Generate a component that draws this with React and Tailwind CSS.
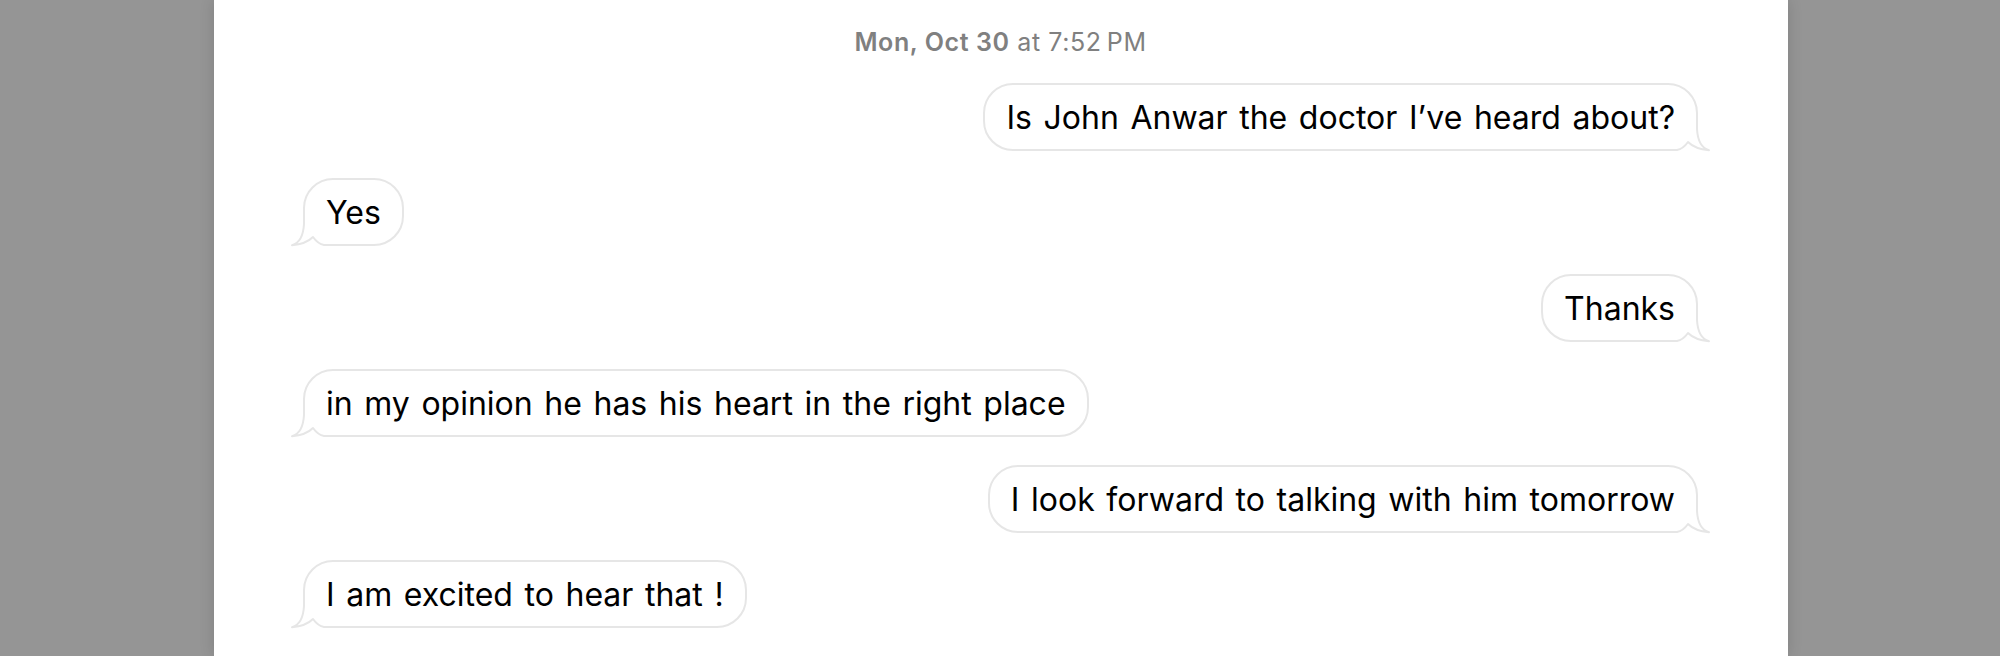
import React from "react";

const messages = [
  { id: 1, mine: true, text: "Is John Anwar the doctor I’ve heard about?" },
  { id: 2, mine: false, text: "Yes" },
  { id: 3, mine: true, text: "Thanks" },
  { id: 4, mine: false, text: "in my opinion he has his heart in the right place" },
  { id: 5, mine: true, text: "I look forward to talking with him tomorrow" },
  { id: 6, mine: false, text: "I am excited to hear that !" },
];

// the little tail drawn over the bubble's bottom corner
function Tail({ mine }) {
  return (
    <svg
      width="48"
      height="36"
      viewBox="0 0 48 36"
      className={
        mine
          ? "absolute right-[-18px] bottom-[-4px] overflow-visible"
          : "absolute left-[-18px] bottom-[-4px] overflow-visible -scale-x-100"
      }
    >
      <path d="M29 4 L36 4 L36 36 L2 36 L2 31 A27 27 0 0 0 29 4 Z" fill="#ffffff" />
      <path
        d="M0 33 L11 33 Q17 32 22 25 Q29 32 43 33.2 Q32 30 31 12 L31 2"
        fill="none"
        stroke="#e6e6e6"
        strokeWidth="2"
        strokeLinejoin="round"
      />
    </svg>
  );
}

function Bubble({ mine, text }) {
  return (
    <div className={mine ? "flex justify-end" : "flex justify-start"}>
      <div className="relative flex items-center h-[68px] pt-[2px] px-[21px] rounded-[30px] border-2 border-[#e6e6e6] bg-white">
        <span className="text-[32px] leading-[40px] text-black whitespace-nowrap [word-spacing:2.6px]">
          {text}
        </span>
        <Tail mine={mine} />
      </div>
    </div>
  );
}

export default function App() {
  return (
    <div className="w-full h-[656px] bg-[#959595] overflow-hidden font-[Inter,sans-serif]">
      <div className="ml-[214px] w-[1574px] h-full bg-white shadow-[0_0_14px_rgba(0,0,0,0.14)] pt-[27px] pl-[89px] pr-[90px]">
        <div className="text-center text-[25px] leading-[31px] tracking-[0.6px] text-[#808080] mb-[25px]">
          <span className="font-semibold">Mon, Oct 30</span>{" "}
          <span className="font-normal">at 7:52{"\u202F"}PM</span>
        </div>
        <div className="flex flex-col gap-[27.4px]">
          {messages.map((m) => (
            <Bubble key={m.id} mine={m.mine} text={m.text} />
          ))}
        </div>
      </div>
    </div>
  );
}
